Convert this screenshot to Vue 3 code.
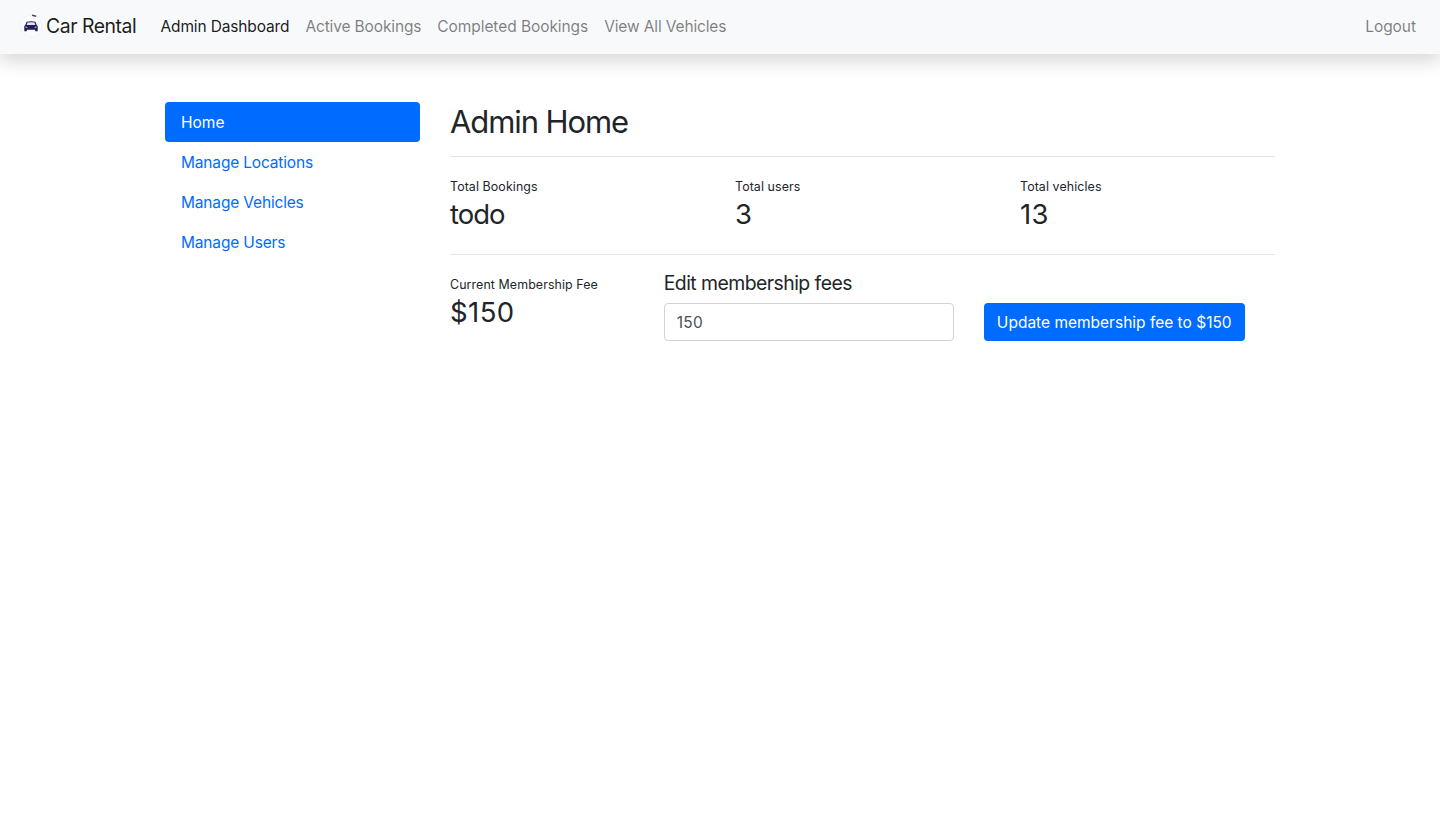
<script setup>
import { ref } from 'vue'

const navLinks = [
  { label: 'Admin Dashboard', active: true, cls: 'l-dash' },
  { label: 'Active Bookings', cls: 'l-active' },
  { label: 'Completed Bookings', cls: 'l-done' },
  { label: 'View All Vehicles', cls: 'l-view' },
]
const sideLinks = ['Home', 'Manage Locations', 'Manage Vehicles', 'Manage Users']
const stats = [
  { label: 'Total Bookings', value: 'todo' },
  { label: 'Total users', value: '3' },
  { label: 'Total vehicles', value: '13' },
]
const fee = ref('150')
</script>

<template>
  <div class="page">
    <nav class="navbar">
      <a class="brand">
        <svg class="logo" viewBox="0 0 30 30" width="30" height="30">
          <circle cx="15" cy="15" r="11" fill="#fafbfc" stroke="#eff0f3" stroke-width="1" stroke-dasharray="5 2" />
          <path d="M16 3.4 L20.3 4.4 L20 6 L16 4.9 Z" fill="#45446f" />
          <g transform="translate(0 0.6)">
            <path d="M10.6 10.2 Q15 9 19.4 10.2 L20.7 13.4 Q21.8 14 21.8 15.3 L21.6 19.6 H19.2 V18.2 H10.8 V19.6 H8.4 L8.2 15.3 Q8.2 14 9.3 13.4 Z" fill="#201d5a" />
            <path d="M11.5 11 Q15 10.1 18.5 11 L19.3 13.3 H10.7 Z" fill="#e4e4ed" />
            <path d="M9.2 14.8 L11.6 15.4 L11.2 16.3 L9.4 16 Z M20.8 14.8 L18.4 15.4 L18.8 16.3 L20.6 16 Z" fill="#c4c4da" />
          </g>
        </svg>
        <span class="brand-text">Car Rental</span>
      </a>
      <div class="links">
        <a v-for="l in navLinks" :key="l.label" class="nav-link" :class="[l.cls, { active: l.active }]">{{ l.label }}</a>
      </div>
      <a class="nav-link logout">Logout</a>
    </nav>

    <div class="container">
      <aside class="side">
        <a v-for="(s, i) in sideLinks" :key="s" class="pill" :class="{ active: i === 0 }">{{ s }}</a>
      </aside>
      <main class="main">
        <h2>Admin Home</h2>
        <hr />
        <div class="stats">
          <div v-for="s in stats" :key="s.label">
            <div class="small">{{ s.label }}</div>
            <div class="value" :class="{ word: s.value === 'todo' }">{{ s.value }}</div>
          </div>
        </div>
        <hr />
        <div class="fees">
          <div class="current">
            <div class="small">Current Membership Fee</div>
            <div class="value">$150</div>
          </div>
          <form class="edit" @submit.prevent>
            <h5>Edit membership fees</h5>
            <div class="controls">
              <input v-model="fee" class="field" type="text" />
              <button class="btn" type="submit">Update membership fee to ${{ fee }}</button>
            </div>
          </form>
        </div>
      </main>
    </div>
  </div>
</template>

<style scoped>
.page {
  font-family: Inter, "Liberation Sans", sans-serif;
  font-size: 15.5px;
  line-height: 24px;
  color: #212529;
  min-height: 816px;
  background: #fff;
}
.navbar {
  display: flex;
  align-items: center;
  height: 54px;
  box-sizing: border-box;
  padding: 0 24px 1px 16px;
  background: #f8f9fb;
  box-shadow: 0 8px 16px rgba(0, 0, 0, 0.15);
}
.brand {
  display: flex;
  align-items: center;
  width: 144.5px;
  color: rgba(0, 0, 0, 0.9);
}
.logo { flex: none; margin-top: -1px; }
.brand-text { font-size: 19.4px; letter-spacing: -0.45px; white-space: nowrap; padding-bottom: 2px; }
.links { display: flex; flex: 1; gap: 16px; }
.nav-link { color: rgba(0, 0, 0, 0.5); white-space: nowrap; letter-spacing: -0.14px; }
.nav-link.active { color: rgba(0, 0, 0, 0.9); }
.nav-link.l-done { letter-spacing: -0.07px; }
.nav-link.logout { letter-spacing: -0.05px; }
.container {
  width: 1110px;
  margin: 48px auto 0;
  display: flex;
  gap: 30px;
}
.side { width: 255px; }
.pill {
  display: block;
  padding: 9px 16px 7px;
  border-radius: 4px;
  color: #006bff;
  letter-spacing: -0.17px;
}
.pill.active { background: #006bff; color: #fff; letter-spacing: 0; }
.main { width: 825px; }
h2 { margin: 0; padding-top: 1px; font-size: 31px; font-weight: 400; line-height: 37.4px; letter-spacing: -1.1px; }
hr { border: 0; height: 1px; background: #e5e5e5; margin: 15.6px 0 16px; }
.stats { display: grid; grid-template-columns: repeat(3, 285px); height: 81px; }
hr + .stats + hr { margin-top: 0; }
.small { font-size: 12.4px; line-height: 23px; padding-top: 2px; letter-spacing: 0.1px; }
.value { font-size: 27.5px; line-height: 33px; letter-spacing: 0.4px; }
.value.word { letter-spacing: -1px; }
.fees { display: flex; }
.current { width: 213.75px; flex: none; }
h5 { margin: 0 0 8px; font-size: 19.4px; font-weight: 400; line-height: 24px; letter-spacing: -0.54px; }
.controls { display: flex; gap: 30px; }
.field {
  width: 290px;
  height: 38px;
  box-sizing: border-box;
  padding: 6px 12px;
  border: 1px solid #ced4da;
  border-radius: 4px;
  font: inherit;
  letter-spacing: 0.3px;
  color: #495057;
  background: #fff;
}
.btn {
  width: 261px;
  height: 38px;
  padding: 2px 0 0;
  border: 0;
  border-radius: 4px;
  background: #006bff;
  color: #fff;
  font: inherit;
  white-space: nowrap;
}
</style>

<style>
body { margin: 0; }
</style>
